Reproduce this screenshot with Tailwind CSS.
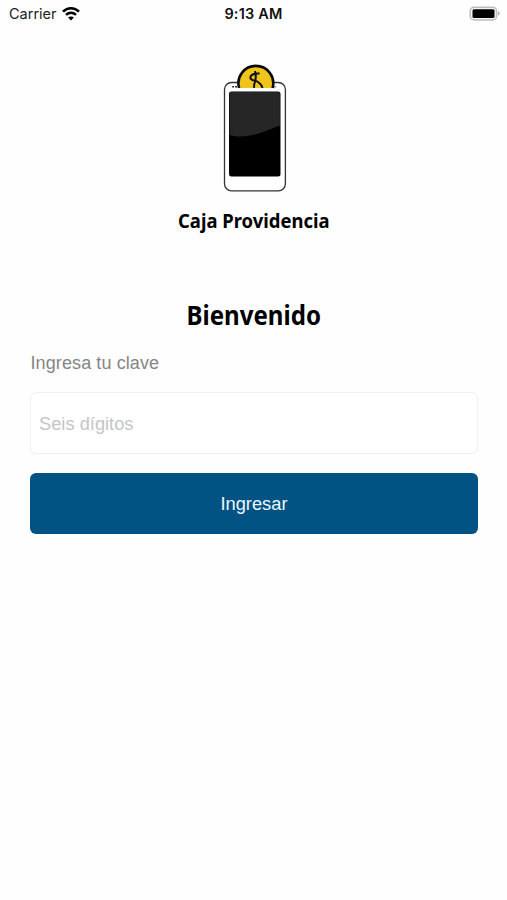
<!DOCTYPE html>
<html lang="es">
<head>
<meta charset="utf-8">
<meta name="viewport" content="width=device-width, initial-scale=1">
<title>Caja Providencia</title>
<script src="https://cdn.jsdelivr.net/npm/@tailwindcss/browser@4"></script>
</head>
<body class="bg-white">
<div class="flex h-[900px] w-[507px] flex-col overflow-hidden bg-[#fefefe] font-['Liberation_Sans',sans-serif]">
  <header class="grid h-7 grid-cols-3 items-center pl-[9px] pr-[7px] font-['Inter',sans-serif]">
    <div class="flex items-center gap-[5px]">
      <span class="text-[14.5px] leading-7 text-[#222]">Carrier</span>
      <svg class="h-[15px] w-[18px] -translate-y-px" viewBox="0 0 18 15" fill="none" stroke="#000" stroke-width="2.6">
        <path d="M1 5.7C5.5 1.100 12.500 1.100 17 5.700"/>
        <path d="M4 8.900c2.900-2.700 7.100-2.700 10 0"/>
        <path d="M9 14.400 6.100 11.500c1.600-1.500 4.200-1.500 5.800 0z" fill="#000" stroke="none"/>
      </svg>
    </div>
    <span class="-ml-[2px] text-center text-[14.5px] font-semibold leading-7 tracking-[0.2px] text-[#111]">9:13 AM</span>
    <svg class="h-[15px] w-[31px] -translate-y-px justify-self-end" viewBox="0 0 31 15">
      <rect x="1.200" y="1.200" width="26.400" height="12.800" rx="4" fill="#f4f4f4" stroke="#bdbdbd" stroke-width="1.500"/>
      <rect x="3.500" y="3.200" width="22" height="8.800" rx="1.500" fill="#000"/>
      <path d="M29 5.300c2.100.8 2.100 3.600 0 4.400z" fill="#aaa"/>
    </svg>
  </header>
  <main class="flex flex-col px-[30px] pt-[34px]">
    <svg class="ml-[192px] h-[132px] w-[66px]" viewBox="222 62 66 132">
      <rect x="224.500" y="82.500" width="60.900" height="108.300" rx="7" fill="#fff" stroke="#333" stroke-width="1.300"/>
      <path d="M238.300 88v-5.300a17.300 17.300 0 0 1 34.600 0v5.300z" fill="#efc51b"/>
      <path d="M239.100 88a17.400 17.400 0 1 1 33.500 0" fill="none" stroke="#0a0a0a" stroke-width="2.600"/>
      <path d="M259.600 73.600c-4.200-.5-9.200 1-9.200 4 0 3.600 4.700 2.400 7.300 4.200 2.400 1.600 4 3.100 4.800 6.200M254.900 71.200c1.400 3.300.8 8.600-.4 12.300-.6 1.900-.6 3-.3 4.500" fill="none" stroke="#111" stroke-width="2"/>
      <path d="M232.200 86.700h1.800m1.100 0h1.900M274.500 86.700h1" stroke="#222" stroke-width="1.500"/>
      <rect x="229" y="91.400" width="51.500" height="85" rx="2.500" fill="#000"/>
      <path d="M229.600 94q0-2 2-2h46.300q2 0 2 2v31.500c-9 3-14 6-25 9-9 2.400-18 2.700-25.300.5z" fill="#262626"/>
    </svg>
    <div class="flex h-[38px] items-center justify-center pt-[16px]">
      <svg class="h-[30px] w-[152px] overflow-visible" viewBox="0 0 152 30"><text class="font-['Noto_Sans',sans-serif] text-[20px] font-bold" x="0" y="21.500" textLength="151.500" lengthAdjust="spacingAndGlyphs" fill="#000">Caja Providencia</text></svg>
    </div>
    <h1 class="mt-[65px] flex h-[36px] justify-center">
      <svg class="h-[36px] w-[134px] overflow-visible" viewBox="0 0 134 36"><text class="font-['Noto_Sans',sans-serif] text-[26px] font-bold" x="-.5" y="27.500" textLength="134.500" lengthAdjust="spacingAndGlyphs" fill="#000">Bienvenido</text></svg>
    </h1>
    <label for="clave" class="mt-[17px] pl-[0.500px] text-[18px] leading-[26px] tracking-[0.100px] text-[#858585]">Ingresa tu clave</label>
    <input id="clave" type="text" placeholder="Seis dígitos" class="mt-[16px] h-[62px] w-[448px] rounded-[6px] border border-[#f0f0f0] bg-white px-[8px] pt-[1px] text-[18.300px] placeholder:text-[#c5c5c7] placeholder:opacity-100">
    <button class="mt-[19px] h-[61px] w-[448px] rounded-[6px] bg-[#005383] text-[18.300px] text-[#eef6fc]">Ingresar</button>
  </main>
</div>
</body>
</html>
